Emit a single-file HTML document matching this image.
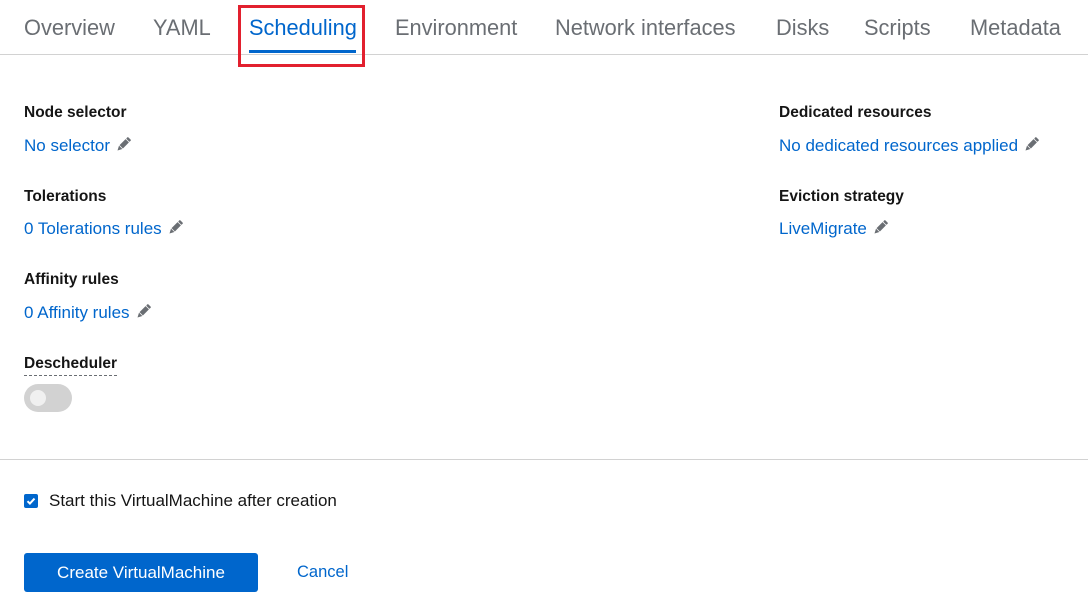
<!DOCTYPE html><html><head><style>
body{margin:0;width:1088px;height:597px;background:#fff;font-family:"Liberation Sans",sans-serif;position:relative;overflow:hidden}
.a{position:absolute;white-space:nowrap}
.tab{font-size:21.8px;color:#6a6e73;top:15px}
.lbl{font-size:15.5px;font-weight:bold;color:#151515}
.lnk{font-size:17px;color:#0066cc}
.pen{display:inline-block;vertical-align:-2px;margin-left:5px}
</style></head><body>
<div class="a tab" style="left:24px">Overview</div>
<div class="a tab" style="left:153px">YAML</div>
<div class="a tab" style="left:249px;color:#0066cc">Scheduling</div>
<div class="a tab" style="left:395px">Environment</div>
<div class="a tab" style="left:555px">Network interfaces</div>
<div class="a tab" style="left:776px">Disks</div>
<div class="a tab" style="left:864px">Scripts</div>
<div class="a tab" style="left:970px">Metadata</div>
<div class="a" style="left:0;top:54px;width:1088px;height:1px;background:#d2d2d2"></div>
<div class="a" style="left:249px;top:50px;width:107px;height:3px;background:#0066cc"></div>
<div class="a" style="left:238px;top:5px;width:121px;height:56px;border:3px solid #e2202e"></div>

<svg width="0" height="0" style="position:absolute"><defs><symbol id="p" viewBox="0 0 18 18"><g transform="rotate(45 9 9)" fill="#6a6e73"><rect x="6.5" y="0" width="5" height="2.6" rx="0.8"/><rect x="6.5" y="3.4" width="5" height="9"/><path d="M6.5 13.2h5L9 18z"/></g></symbol></defs></svg>

<div class="a lbl" style="left:24px;top:104px">Node selector</div>
<div class="a lnk" style="left:24px;top:136px">No selector<svg class="pen" width="17" height="17"><use href="#p"/></svg></div>
<div class="a lbl" style="left:24px;top:188px">Tolerations</div>
<div class="a lnk" style="left:24px;top:219px">0 Tolerations rules<svg class="pen" width="17" height="17"><use href="#p"/></svg></div>
<div class="a lbl" style="left:24px;top:271px">Affinity rules</div>
<div class="a lnk" style="left:24px;top:303px">0 Affinity rules<svg class="pen" width="17" height="17"><use href="#p"/></svg></div>
<div class="a lbl" style="left:24px;top:355px;border-bottom:1px dashed #6a6e73;padding-bottom:2px">Descheduler</div>
<div class="a" style="left:24px;top:384px;width:48px;height:28px;border-radius:14px;background:#d2d2d2"></div>
<div class="a" style="left:30px;top:390px;width:16px;height:16px;border-radius:8px;background:#f0f0f0"></div>

<div class="a lbl" style="left:779px;top:104px">Dedicated resources</div>
<div class="a lnk" style="left:779px;top:136px">No dedicated resources applied<svg class="pen" width="17" height="17"><use href="#p"/></svg></div>
<div class="a lbl" style="left:779px;top:188px">Eviction strategy</div>
<div class="a lnk" style="left:779px;top:219px">LiveMigrate<svg class="pen" width="17" height="17"><use href="#p"/></svg></div>

<div class="a" style="left:0;top:459px;width:1088px;height:1px;background:#d2d2d2"></div>
<div class="a" style="left:24px;top:494px;width:14px;height:14px;border-radius:2px;background:#0066cc"><svg width="14" height="14"><path d="M3.5 7.2l2.4 2.4 4.6-5" stroke="#fff" stroke-width="2" fill="none"/></svg></div>
<div class="a" style="left:49px;top:491px;font-size:17px;color:#151515">Start this VirtualMachine after creation</div>
<div class="a" style="left:24px;top:553px;width:234px;height:39px;background:#0066cc;border-radius:3px;color:#fff;font-size:17px;text-align:center;line-height:39px">Create VirtualMachine</div>
<div class="a" style="left:297px;top:563px;font-size:16.5px;color:#0066cc">Cancel</div>
</body></html>
